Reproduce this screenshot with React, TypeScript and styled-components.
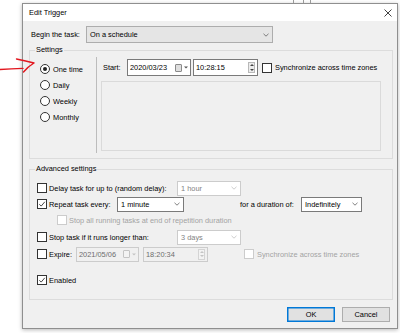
import React from "react";
import styled, { createGlobalStyle, css } from "styled-components";

const Global = createGlobalStyle`
  html, body { margin: 0; padding: 0; background: #fff; }
  body {
    width: 400px; height: 333px; overflow: hidden;
    font-family: "Liberation Sans", Arial, sans-serif;
    font-size: 7.4px; color: #000;
  }
  * { box-sizing: border-box; }
`;

const Desktop = styled.div`
  position: relative;
  width: 400px;
  height: 333px;
  padding: 3px 0 0 22px;
`;

const BackdropTick = styled.div<{ $x: number }>`
  position: absolute;
  top: 0;
  left: ${(p) => p.$x}px;
  width: 1px;
  height: 3px;
  background: #9a9a9a;
`;

const Annotation = styled.svg`
  position: absolute;
  left: 0;
  top: 52px;
  overflow: visible;
`;

const Window = styled.div`
  width: 376px;
  height: 326px;
  border: 1px solid #8f8f8f;
  display: flex;
  flex-direction: column;
  background: #f0f0f0;
  box-shadow: 0 1px 4px rgba(0, 0, 0, 0.28);
`;

const TitleBar = styled.div`
  height: 17px;
  flex: none;
  background: #fff;
  display: flex;
  align-items: center;
  justify-content: space-between;
  padding: 0 5px 0 6px;
`;

const Title = styled.span`
  font-size: 7.4px;
  color: #000;
`;

const Client = styled.div`
  flex: 1;
  display: flex;
  flex-direction: column;
  padding: 5px 4px 0 6px;
`;

const Row = styled.div<{ $h?: number; $mt?: number; $pl?: number }>`
  display: flex;
  align-items: center;
  height: ${(p) => p.$h ?? 16}px;
  margin-top: ${(p) => p.$mt ?? 0}px;
  padding-left: ${(p) => p.$pl ?? 0}px;
  flex: none;
`;

const Label = styled.span<{ $w?: number; $disabled?: boolean; $ml?: number }>`
  white-space: nowrap;
  ${(p) => (p.$w ? `width: ${p.$w}px; flex: none;` : "")}
  margin-left: ${(p) => p.$ml ?? 0}px;
  color: ${(p) => (p.$disabled ? "#a3a3a3" : "#000")};
`;

type FieldKind = "list" | "edit" | "disabled";

const Field = styled.div<{ $w: number; $h?: number; $kind: FieldKind; $ml?: number }>`
  width: ${(p) => p.$w}px;
  height: ${(p) => p.$h ?? 15}px;
  flex: none;
  margin-left: ${(p) => p.$ml ?? 0}px;
  display: flex;
  align-items: center;
  justify-content: space-between;
  padding: 0 3px 0 3px;
  ${(p) =>
    p.$kind === "list"
      ? css`
          background: #e5e5e5;
          border: 1px solid #adadad;
          color: #000;
        `
      : p.$kind === "edit"
      ? css`
          background: #fff;
          border: 1px solid #7a7a7a;
          color: #000;
        `
      : css`
          background: #fff;
          border: 1px solid #cccccc;
          color: #838383;
        `}
`;

const DateField = styled(Field)`
  padding: 0 2px 0 2px;
  ${(p) =>
    p.$kind === "disabled" &&
    css`
      background: #f0f0f0;
      color: #6d6d6d;
    `}
`;

const FieldEnd = styled.div`
  display: flex;
  align-items: center;
  gap: 2px;
`;

const CalIcon = styled.div<{ $disabled?: boolean }>`
  width: 7px;
  height: 8px;
  border: 1px solid ${(p) => (p.$disabled ? "#c4c4c4" : "#8a8a8a")};
  background: ${(p) => (p.$disabled ? "#f3f3f3" : "#dedede")};
  border-radius: 1px;
`;

const Spin = styled.div<{ $disabled?: boolean }>`
  width: 7px;
  height: 11px;
  display: flex;
  flex-direction: column;
  align-items: center;
  justify-content: space-around;
  border: 1px solid ${(p) => (p.$disabled ? "#d4d4d4" : "#b8b8b8")};
  background: ${(p) => (p.$disabled ? "#f3f3f3" : "#ececec")};
`;

const GroupBox = styled.div<{ $h: number; $mt: number }>`
  position: relative;
  flex: none;
  height: ${(p) => p.$h}px;
  margin-top: ${(p) => p.$mt}px;
  border: 1px solid #dcdcdc;
`;

const GroupTitle = styled.span`
  position: absolute;
  top: -6px;
  left: 5px;
  padding: 0 1px;
  line-height: 10px;
  background: #f0f0f0;
`;

const SettingsBody = styled.div`
  display: flex;
  height: 100%;
`;

const RadioList = styled.div`
  width: 66px;
  flex: none;
  padding: 10px 0 0 10px;
  display: flex;
  flex-direction: column;
`;

const Separator = styled.div`
  width: 1px;
  flex: none;
  margin: 6px 0 5px 0;
  background: #bcbcbc;
`;

const ScheduleCol = styled.div`
  flex: 1;
  padding: 8px 0 0 4px;
  display: flex;
  flex-direction: column;
`;

const EmptyPanel = styled.div`
  width: 280px;
  height: 70px;
  margin-top: 5px;
  border: 1px solid #dadada;
`;

const AdvancedBody = styled.div`
  padding: 10px 0 0 7px;
  display: flex;
  flex-direction: column;
`;

const Check = styled.span<{ $disabled?: boolean }>`
  width: 10px;
  height: 10px;
  flex: none;
  margin-right: 2px;
  display: inline-flex;
  align-items: center;
  justify-content: center;
  background: #fff;
  border: 1px solid ${(p) => (p.$disabled ? "#cccccc" : "#333")};
`;

const Radio = styled.span`
  width: 10px;
  height: 10px;
  flex: none;
  margin-right: 3px;
  border-radius: 50%;
  border: 1px solid #333;
  background: #fff;
  display: inline-flex;
  align-items: center;
  justify-content: center;
`;

const RadioDot = styled.span`
  width: 4px;
  height: 4px;
  border-radius: 50%;
  background: #222;
`;

const ButtonRow = styled.div`
  display: flex;
  justify-content: flex-end;
  gap: 7px;
  margin-top: 7px;
  padding-right: 3px;
`;

const Button = styled.button<{ $default?: boolean }>`
  width: 48px;
  height: 15px;
  padding: 0;
  font: inherit;
  font-size: 7.4px;
  color: #000;
  background: #e1e1e1;
  border: 1px solid ${(p) => (p.$default ? "#0078d7" : "#adadad")};
  ${(p) => p.$default && "box-shadow: inset 0 0 0 0.5px #0078d7;"}
`;

const Chevron = ({ disabled }: { disabled?: boolean }) => (
  <svg width="6" height="4" viewBox="0 0 6 4">
    <path d="M0.5 0.8 L3 3.2 L5.5 0.8" fill="none" stroke={disabled ? "#c0c0c0" : "#606060"} strokeWidth="0.8" />
  </svg>
);

const SmallArrow = ({ disabled }: { disabled?: boolean }) => (
  <svg width="4" height="3" viewBox="0 0 4 3">
    <path d="M0 0.5 L4 0.5 L2 2.5 Z" fill={disabled ? "#c4c4c4" : "#555"} />
  </svg>
);

const SpinArrows = ({ disabled }: { disabled?: boolean }) => {
  const c = disabled ? "#c4c4c4" : "#444";
  return (
    <Spin $disabled={disabled}>
      <svg width="4" height="2" viewBox="0 0 4 2">
        <path d="M0 2 L4 2 L2 0 Z" fill={c} />
      </svg>
      <svg width="4" height="2" viewBox="0 0 4 2">
        <path d="M0 0 L4 0 L2 2 Z" fill={c} />
      </svg>
    </Spin>
  );
};

const CheckMark = () => (
  <svg width="8" height="8" viewBox="0 0 8 8">
    <path d="M1.3 4.2 L3.2 6.1 L6.8 1.8" fill="none" stroke="#333" strokeWidth="0.9" />
  </svg>
);

const CheckBox = ({ checked, disabled }: { checked?: boolean; disabled?: boolean }) => (
  <Check $disabled={disabled}>{checked && <CheckMark />}</Check>
);

const Combo = ({
  w,
  kind,
  text,
  ml,
  h,
}: {
  w: number;
  kind: FieldKind;
  text: string;
  ml?: number;
  h?: number;
}) => (
  <Field $w={w} $kind={kind} $ml={ml} $h={h}>
    <span>{text}</span>
    <Chevron disabled={kind === "disabled"} />
  </Field>
);

const DatePicker = ({ w, text, disabled, ml, h }: { w: number; text: string; disabled?: boolean; ml?: number; h?: number }) => (
  <DateField $w={w} $h={h} $kind={disabled ? "disabled" : "edit"} $ml={ml}>
    <span>{text}</span>
    <FieldEnd>
      <CalIcon $disabled={disabled} />
      <SmallArrow disabled={disabled} />
    </FieldEnd>
  </DateField>
);

const TimePicker = ({ w, text, disabled, ml, h }: { w: number; text: string; disabled?: boolean; ml?: number; h?: number }) => (
  <DateField $w={w} $h={h} $kind={disabled ? "disabled" : "edit"} $ml={ml}>
    <span>{text}</span>
    <SpinArrows disabled={disabled} />
  </DateField>
);

const CloseIcon = () => (
  <svg width="8" height="8" viewBox="0 0 8 8">
    <path d="M0.5 0.5 L7.5 7.5 M7.5 0.5 L0.5 7.5" stroke="#111" strokeWidth="0.8" />
  </svg>
);

export default function App() {
  return (
    <>
      <Global />
      <Desktop>
        <BackdropTick $x={293} />
        <BackdropTick $x={303} />
        <BackdropTick $x={310} />
        <Window>
          <TitleBar>
            <Title>Edit Trigger</Title>
            <CloseIcon />
          </TitleBar>
          <Client>
            <Row $h={17} $pl={2}>
              <Label $w={55}>Begin the task:</Label>
              <Combo w={187} h={17} kind="list" text="On a schedule" />
            </Row>

            <GroupBox $h={109} $mt={7}>
              <GroupTitle>Settings</GroupTitle>
              <SettingsBody>
                <RadioList>
                  <Row>
                    <Radio>
                      <RadioDot />
                    </Radio>
                    <Label>One time</Label>
                  </Row>
                  <Row>
                    <Radio />
                    <Label>Daily</Label>
                  </Row>
                  <Row>
                    <Radio />
                    <Label>Weekly</Label>
                  </Row>
                  <Row>
                    <Radio />
                    <Label>Monthly</Label>
                  </Row>
                </RadioList>
                <Separator />
                <ScheduleCol>
                  <Row $h={17} $pl={2}>
                    <Label $w={24}>Start:</Label>
                    <DatePicker w={64} h={17} text="2020/03/23" />
                    <TimePicker w={65} h={17} ml={2} text="10:28:15" />
                    <Row $h={17} $pl={4}>
                      <CheckBox />
                      <Label $ml={1}>Synchronize across time zones</Label>
                    </Row>
                  </Row>
                  <EmptyPanel />
                </ScheduleCol>
              </SettingsBody>
            </GroupBox>

            <GroupBox $h={131} $mt={10}>
              <GroupTitle>Advanced settings</GroupTitle>
              <AdvancedBody>
                <Row>
                  <CheckBox />
                  <Label $w={128}>Delay task for up to (random delay):</Label>
                  <Combo w={64} kind="disabled" text="1 hour" />
                </Row>
                <Row>
                  <CheckBox checked />
                  <Label $w={68}>Repeat task every:</Label>
                  <Combo w={67} kind="edit" text="1 minute" />
                  <Label $w={61} $ml={56}>for a duration of:</Label>
                  <Combo w={61} kind="edit" text="Indefinitely" />
                </Row>
                <Row $pl={20}>
                  <CheckBox disabled />
                  <Label $disabled>Stop all running tasks at end of repetition duration</Label>
                </Row>
                <Row $mt={1}>
                  <CheckBox />
                  <Label $w={128}>Stop task if it runs longer than:</Label>
                  <Combo w={64} kind="disabled" text="3 days" />
                </Row>
                <Row $mt={1}>
                  <CheckBox />
                  <Label $w={27}>Expire:</Label>
                  <DatePicker w={63} disabled text="2021/05/06" />
                  <TimePicker w={65} ml={4} disabled text="18:20:34" />
                  <Row $pl={36}>
                    <CheckBox disabled />
                    <Label $ml={1} $disabled>
                      Synchronize across time zones
                    </Label>
                  </Row>
                </Row>
                <Row $mt={10}>
                  <CheckBox checked />
                  <Label>Enabled</Label>
                </Row>
              </AdvancedBody>
            </GroupBox>

            <ButtonRow>
              <Button $default>OK</Button>
              <Button>Cancel</Button>
            </ButtonRow>
          </Client>
        </Window>
        <Annotation width="40" height="24" viewBox="0 52 40 24">
          <path d="M0 69.5 Q11 68.8 23 68.4" fill="none" stroke="#e2161e" strokeWidth="1.4" strokeLinecap="round" />
          <path d="M16.5 59 Q26 60.8 34 63 Q28 66.5 23.5 72" fill="none" stroke="#e2161e" strokeWidth="1.4" strokeLinecap="round" strokeLinejoin="round" />
        </Annotation>
      </Desktop>
    </>
  );
}
